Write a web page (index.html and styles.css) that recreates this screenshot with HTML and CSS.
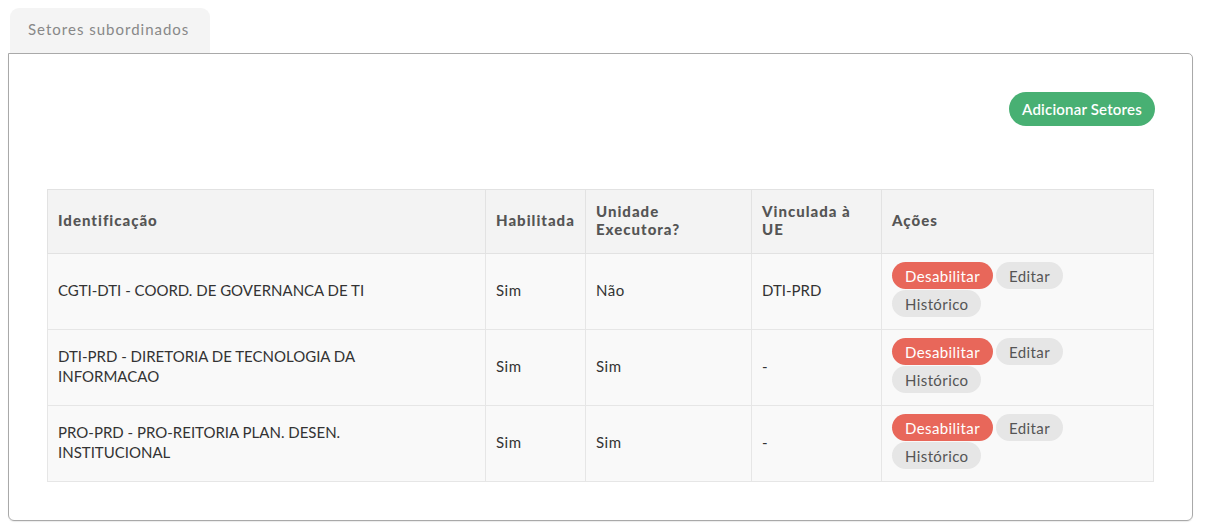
FILE: index.html
```html
<!DOCTYPE html>
<html lang="pt-BR">
<head>
<meta charset="utf-8">
<title>Setores subordinados</title>
<link rel="stylesheet" href="styles.css">
</head>
<body>
<div class="tabs">
  <div class="tab">Setores subordinados</div>
</div>
<div class="panel">
  <div class="toolbar">
    <button class="btn btn-add">Adicionar Setores</button>
  </div>
  <table class="grid">
    <colgroup>
      <col class="c1"><col class="c2"><col class="c3"><col class="c4"><col class="c5">
    </colgroup>
    <thead>
      <tr>
        <th>Identificação</th>
        <th>Habilitada</th>
        <th>Unidade Executora?</th>
        <th>Vinculada à UE</th>
        <th>Ações</th>
      </tr>
    </thead>
    <tbody>
      <tr>
        <td class="ident">CGTI-DTI - COORD. DE GOVERNANCA DE TI</td>
        <td class="mixed">Sim</td>
        <td class="mixed">Não</td>
        <td>DTI-PRD</td>
        <td><div class="actions"><button class="pill red">Desabilitar</button><button class="pill gray">Editar</button><button class="pill gray">Histórico</button></div></td>
      </tr>
      <tr>
        <td class="ident">DTI-PRD - DIRETORIA DE TECNOLOGIA DA INFORMACAO</td>
        <td class="mixed">Sim</td>
        <td class="mixed">Sim</td>
        <td>-</td>
        <td><div class="actions"><button class="pill red">Desabilitar</button><button class="pill gray">Editar</button><button class="pill gray">Histórico</button></div></td>
      </tr>
      <tr>
        <td class="ident">PRO-PRD - PRO-REITORIA PLAN. DESEN. INSTITUCIONAL</td>
        <td class="mixed">Sim</td>
        <td class="mixed">Sim</td>
        <td>-</td>
        <td><div class="actions"><button class="pill red">Desabilitar</button><button class="pill gray">Editar</button><button class="pill gray">Histórico</button></div></td>
      </tr>
    </tbody>
  </table>
</div>
</body>
</html>
```
FILE: styles.css
```css
html, body {
  margin: 0;
  padding: 0;
  background: #fff;
}
body {
  padding: 8px 23px 8px 8px;
  font-family: Lato, "Noto Sans", sans-serif;
  color: #333;
}
.tabs {
  display: flex;
  padding-left: 2px;
}
.tab {
  width: 200px;
  height: 45px;
  box-sizing: border-box;
  padding: 12px 0 0 18px;
  background: #f4f4f4;
  border-radius: 9px 9px 0 0;
  font-size: 15px;
  letter-spacing: 1px;
  color: #888;
}
.panel {
  border: 1px solid #a9a9a9;
  border-radius: 0 5px 6px 6px;
  padding: 38px 38px 38px 38px;
  box-shadow: 0 1px 1px rgba(0,0,0,0.08);
}
.toolbar {
  display: flex;
  justify-content: flex-end;
  margin-bottom: 63px;
}
.btn {
  font-family: inherit;
  border: none;
  cursor: pointer;
}
.btn-add {
  height: 34px;
  padding: 0 13px;
  border-radius: 17px;
  background: #48b073;
  color: #fff;
  font-size: 15px;
  font-weight: 600;
  letter-spacing: 0.2px;
  margin-right: -1px;
}
.grid {
  width: 100%;
  border-collapse: collapse;
  table-layout: fixed;
  border: 1px solid #dcdcdc;
}
.c1 { width: 438px; }
.c2 { width: 100px; }
.c3 { width: 166px; }
.c4 { width: 130px; }
.c5 { width: auto; }
.grid th {
  background: #f3f3f3;
  color: #555;
  font-size: 15px;
  font-weight: 900;
  letter-spacing: 1px;
  text-align: left;
  line-height: 18px;
  height: 64px;
  box-sizing: border-box;
  padding: 0 10px 3px;
  border: 1px solid #e2e2e2;
}
.grid td {
  background: #f9f9f9;
  font-size: 15px;
  line-height: 20px;
  height: 76px;
  box-sizing: border-box;
  padding: 8px 10px 12px;
  border: 1px solid #e6e6e6;
  vertical-align: middle;
}
.grid td.ident {
  padding-right: 50px;
}
.grid td.mixed {
  letter-spacing: 0.5px;
}
.actions {
  display: flex;
  flex-wrap: wrap;
  gap: 1px 3px;
}
.pill {
  font-family: inherit;
  font-size: 15px;
  letter-spacing: 0.4px;
  height: 27px;
  border: none;
  border-radius: 14px;
  padding: 0 13px;
  cursor: pointer;
}
.pill.red {
  background: #e8675a;
  color: #fff;
}
.pill.gray {
  background: #e6e6e6;
  color: #555;
}
```
